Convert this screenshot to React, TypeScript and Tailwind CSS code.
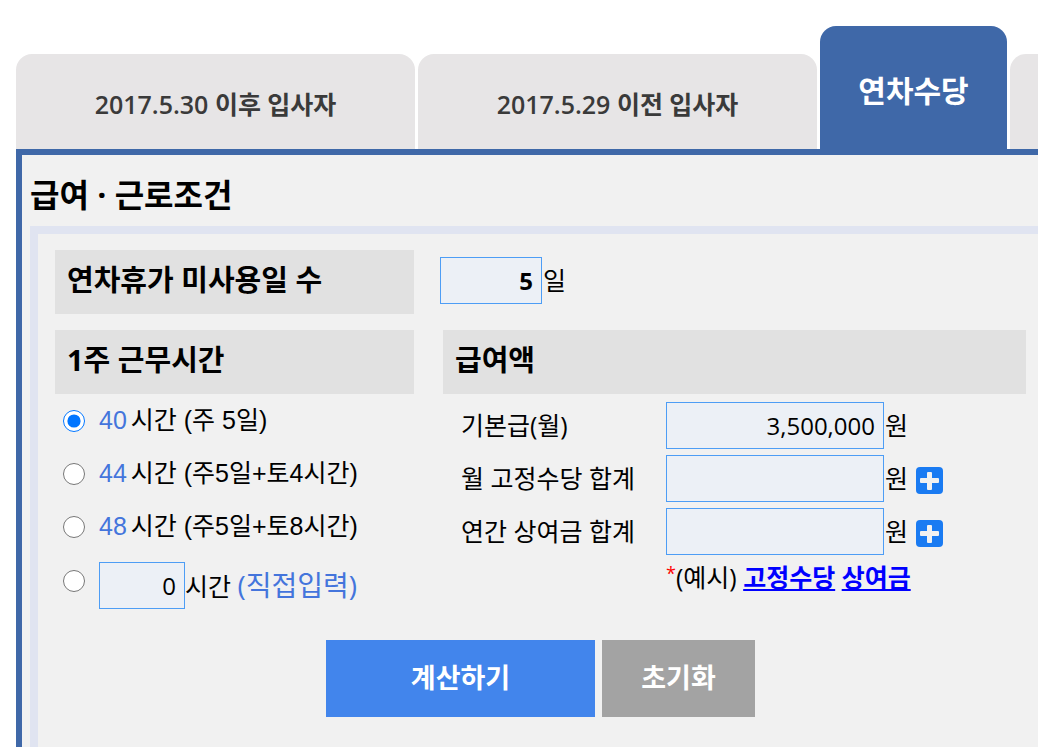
import { useState } from 'react';

const TABS = [
  { id: 'after', name: '2017.5.30 이후 입사자' },
  { id: 'before', name: '2017.5.29 이전 입사자' },
  { id: 'allowance', name: '연차수당' },
  { id: 'more', name: '' },
];

const HOURS = [
  { value: '40', detail: '시간 (주 5일)' },
  { value: '44', detail: '시간 (주5일+토4시간)' },
  { value: '48', detail: '시간 (주5일+토8시간)' },
];

const inputClass =
  'h-[47px] rounded-none border border-[#4d9df5] bg-[#ecf0f6] px-2 text-right text-2xl text-black outline-none';

function PlusIcon() {
  return (
    <svg viewBox="0 0 27 27" className="size-[27px]" aria-hidden="true">
      <rect width="27" height="27" rx="4" fill="#1a7bf2" />
      <rect x="11" y="5" width="5" height="18" rx="1" fill="#f1f1f1" />
      <rect x="4" y="11" width="19" height="5" rx="1" fill="#f1f1f1" />
    </svg>
  );
}

function PayRow({ id, label, value, onChange, onAdd }: {
  id: string;
  label: string;
  value: string;
  onChange: (v: string) => void;
  onAdd?: () => void;
}) {
  return (
    <div className="flex items-center">
      <label htmlFor={id} className="w-[205px] shrink-0 text-[25px]">{label}</label>
      <input
        id={id}
        value={value}
        onChange={e => onChange(e.target.value)}
        className={`${inputClass} w-[218px]`}
      />
      <span className="pl-px text-[25px]">원</span>
      {onAdd && (
        <button type="button" aria-label={`${label} 추가`} onClick={onAdd} className="mt-1 ml-2">
          <PlusIcon />
        </button>
      )}
    </div>
  );
}

export default function App() {
  const [tab, setTab]         = useState('allowance');
  const [days, setDays]       = useState('5');
  const [hours, setHours]     = useState('40');
  const [custom, setCustom]   = useState('0');
  const [base, setBase]       = useState('3,500,000');
  const [fixed, setFixed]     = useState('');
  const [bonus, setBonus]     = useState('');

  const reset = () => {
    setDays('');
    setHours('40');
    setCustom('0');
    setBase('');
    setFixed('');
    setBonus('');
  };

  return (
    <div className="flex min-h-screen flex-col overflow-hidden bg-white pt-[26px] pl-4 font-['Open_Sans','Noto_Sans_CJK_KR',sans-serif] text-black">
      {/* Tabs */}
      <div className="flex items-end gap-[3px]">
        {TABS.map(t => (
          <button
            key={t.id}
            type="button"
            aria-label={t.name || '더보기'}
            onClick={() => setTab(t.id)}
            className={
              t.id === tab
                ? 'h-[123px] w-[187px] shrink-0 rounded-t-2xl bg-[#3f68a8] pt-[6px] text-[30px] font-bold text-white'
                : 'h-[95px] w-[399px] shrink-0 rounded-t-2xl bg-[#e7e5e6] pt-[6px] text-[25px] font-semibold text-[#3a3a3a]'
            }
          >
            {t.name}
          </button>
        ))}
      </div>

      {/* Panel */}
      <form
        onSubmit={e => e.preventDefault()}
        className="flex flex-1 flex-col border-t-6 border-l-6 border-[#3f68a8] bg-[#f1f1f1] pt-4 pl-2"
      >
        <h1 className="text-[32px] leading-[47px] font-bold">급여 · 근로조건</h1>

        <div className="mt-2 flex-1 border-t-8 border-l-8 border-[#e0e4f1] pt-4 pr-3 pb-[30px] pl-[17px]">
          <div className="flex items-start gap-[26px]">
            <label htmlFor="days" className="h-16 w-[359px] bg-[#e1e1e1] px-3 text-[29px] leading-[60px] font-bold">
              연차휴가 미사용일 수
            </label>
            <div className="flex items-center pt-[7px]">
              <input
                id="days"
                value={days}
                onChange={e => setDays(e.target.value)}
                className={`${inputClass} w-[102px] font-bold`}
              />
              <span className="pl-px text-[25px]">일</span>
            </div>
          </div>

          <div className="mt-4 grid grid-cols-[359px_1fr] gap-[29px]">
            <fieldset>
              <legend className="h-16 w-full bg-[#e1e1e1] px-3 text-[29px] leading-[60px] font-bold">
                1주 근무시간
              </legend>
              <div className="flex flex-col gap-[6px] pt-[3px] pl-2">
                {HOURS.map(h => (
                  <label key={h.value} className="flex h-[47px] items-center text-[25px]">
                    <input
                      type="radio"
                      name="hours"
                      checked={hours === h.value}
                      onChange={() => setHours(h.value)}
                      className="mr-[14px] size-[22px]"
                    />
                    <span className="pr-1 font-['Liberation_Sans',sans-serif] text-[#4475dc]">{h.value}</span>
                    <span className="font-['Liberation_Sans','Noto_Sans_CJK_KR',sans-serif]">{h.detail}</span>
                  </label>
                ))}
                <div className="flex h-[53px] items-start pt-[6px]">
                  <input
                    id="hours-custom"
                    type="radio"
                    name="hours"
                    checked={hours === 'custom'}
                    onChange={() => setHours('custom')}
                    className="mt-2 mr-[14px] size-[22px]"
                  />
                  <input
                    aria-label="직접입력 시간"
                    value={custom}
                    onChange={e => setCustom(e.target.value)}
                    className={`${inputClass} w-[86px]`}
                  />
                  <label htmlFor="hours-custom" className="text-[25px] leading-[47px]">
                    시간 <span className="text-[28px] text-[#4475dc]">(직접입력)</span>
                  </label>
                </div>
              </div>
            </fieldset>

            <section>
              <h2 className="h-16 bg-[#e1e1e1] px-3 text-[29px] leading-[60px] font-bold">급여액</h2>
              <div className="flex flex-col gap-[6px] pt-2 pl-[18px]">
                <PayRow id="base" label="기본급(월)" value={base} onChange={setBase} />
                <PayRow id="fixed" label="월 고정수당 합계" value={fixed} onChange={setFixed} onAdd={() => {}} />
                <PayRow id="bonus" label="연간 상여금 합계" value={bonus} onChange={setBonus} onAdd={() => {}} />
                <p className="pl-[205px] text-[25px] leading-8">
                  <span className="align-top text-lg leading-6 text-[#ff0000]">*</span>(예시){' '}
                  <a href="#fixed" className="font-bold text-[#0000ff] underline">고정수당</a>{' '}
                  <a href="#bonus" className="font-bold text-[#0000ff] underline">상여금</a>
                </p>
              </div>
            </section>
          </div>

          {/* Actions */}
          <div className="mt-[31px] flex justify-center gap-[7px]">
            <button type="submit" className="h-[77px] w-[269px] bg-[#4285ec] text-[27px] font-bold text-white">
              계산하기
            </button>
            <button type="button" onClick={reset} className="h-[77px] w-[153px] bg-[#a3a3a3] text-[27px] font-bold text-white">
              초기화
            </button>
          </div>
        </div>
      </form>
    </div>
  );
}
